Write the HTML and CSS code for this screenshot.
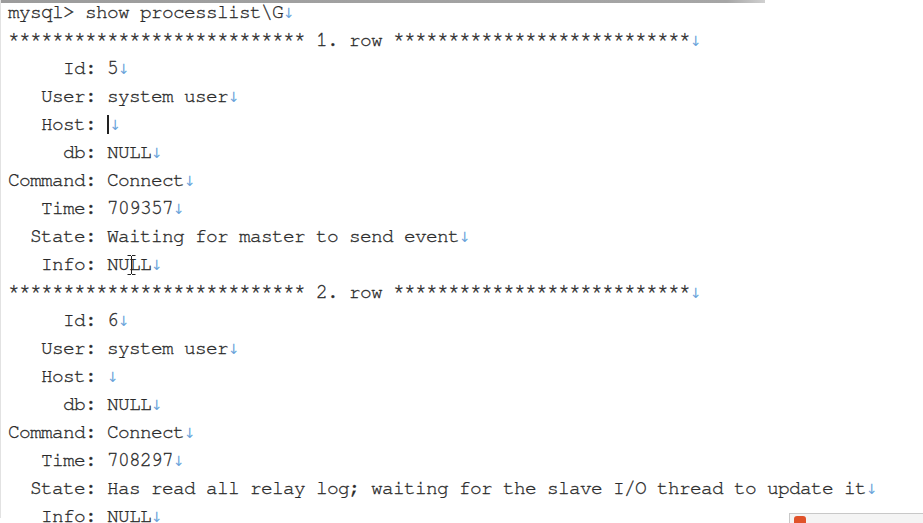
FILE: index.html
```html
<!DOCTYPE html>
<html>
<head>
<meta charset="utf-8">
<link rel="stylesheet" href="styles.css">
</head>
<body>
<div class="topbar"></div>
<div class="editor">
<pre class="text">mysql&gt; show processlist\G<span class="nl">↓</span>
*************************** 1. row ***************************<span class="nl">↓</span>
     Id: 5<span class="nl">↓</span>
   User: system user<span class="nl">↓</span>
   Host: <span class="caret"></span><span class="nl">↓</span>
     db: NULL<span class="nl">↓</span>
Command: Connect<span class="nl">↓</span>
   Time: 709357<span class="nl">↓</span>
  State: Waiting for master to send event<span class="nl">↓</span>
   Info: NU<span class="ibeam-wrap">L<svg class="ibeam" width="9" height="20" viewBox="0 0 9 20"><path d="M0.5 0.5h3.5M5 0.5h3.5M4.5 1v18M0.5 19.5h3.5M5 19.5h3.5" stroke="#222" stroke-width="1" fill="none"/></svg></span>L<span class="nl">↓</span>
*************************** 2. row ***************************<span class="nl">↓</span>
     Id: 6<span class="nl">↓</span>
   User: system user<span class="nl">↓</span>
   Host: <span class="nl">↓</span>
     db: NULL<span class="nl">↓</span>
Command: Connect<span class="nl">↓</span>
   Time: 708297<span class="nl">↓</span>
  State: Has read all relay log; waiting for the slave I/O thread to update it<span class="nl">↓</span>
   Info: NULL<span class="nl">↓</span></pre>
<div class="popup"><span class="popup-icon"></span></div>
</div>
</body>
</html>
```
FILE: styles.css
```css
html, body {
  margin: 0;
  padding: 0;
  background: #ffffff;
  width: 923px;
  height: 523px;
  overflow: hidden;
}
.topbar {
  height: 3px;
  width: 765px;
  background: linear-gradient(90deg, #9c9c9c 0%, #a6a6a6 95%, #d0d0d0 100%);
}
.editor {
  position: relative;
  height: 520px;
  border-left: 1px solid #e2e2e2;
}
.text {
  margin: -5px 0 0 0;
  padding-left: 7px;
  font-family: "Nimbus Mono PS", "Nimbus Mono L", "FreeMono", "Courier 10 Pitch", "Courier", "Liberation Mono", monospace;
  font-size: 19.5px;
  letter-spacing: -0.7px;
  line-height: 28px;
  color: #2a2a2a;
  -webkit-text-stroke: 0.3px #2a2a2a;
  white-space: pre;
}
.nl {
  color: #6aa3da;
  -webkit-text-stroke: 0;
  letter-spacing: 0;
  font-family: "DejaVu Sans", sans-serif;
  font-size: 14px;
  line-height: 0;
  display: inline-block;
  width: 8px;
  overflow: visible;
}
.caret {
  display: inline-block;
  width: 1.5px;
  height: 19px;
  background: #222;
  vertical-align: -4px;
  margin-right: 1px;
  line-height: 0;
}
.ibeam-wrap {
  position: relative;
}
.ibeam {
  position: absolute;
  left: -2px;
  top: 1px;
}
.popup {
  position: absolute;
  left: 788px;
  top: 515px;
  width: 140px;
  height: 20px;
  border: 1px solid #c8c8c8;
  background: #f4f4f4;
}
.popup-icon {
  display: block;
  margin: 2px 0 0 4px;
  width: 12px;
  height: 10px;
  border-radius: 3px;
  background: #e0522a;
}
```
